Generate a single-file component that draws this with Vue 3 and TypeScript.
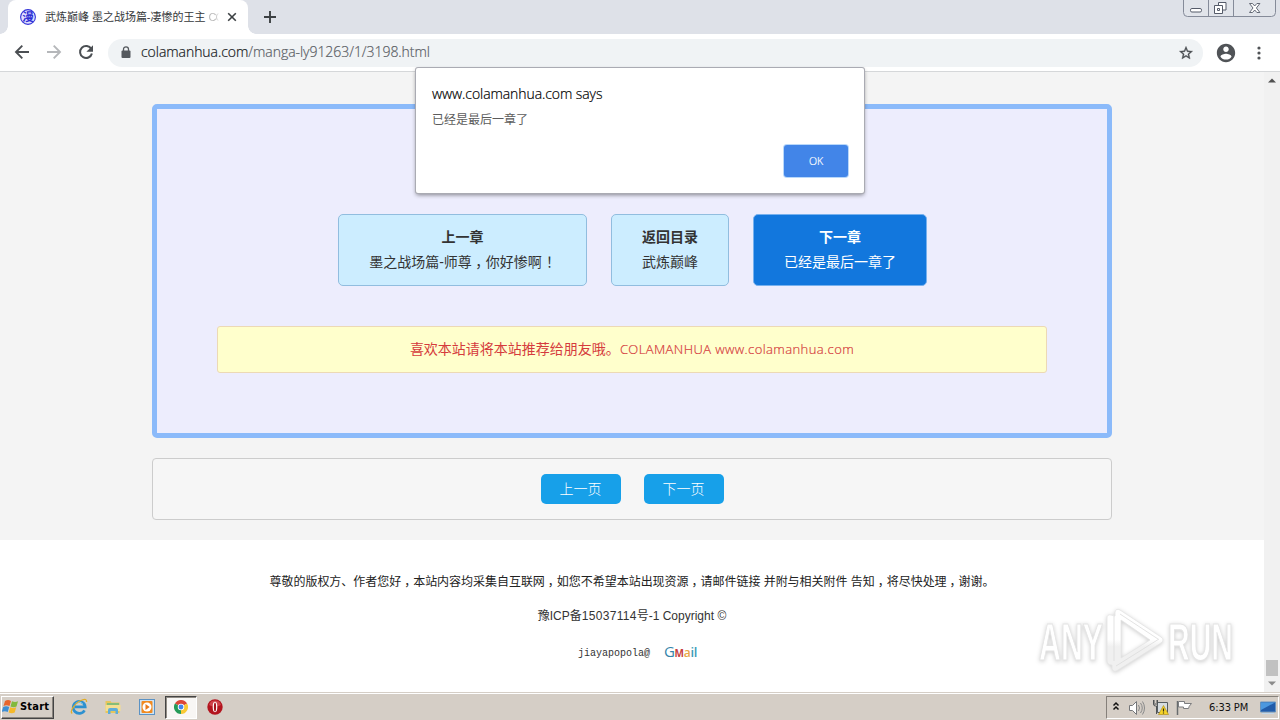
<script setup lang="ts">
interface Chapter {
  title: string
  name: string
  active: boolean
}

const chapters: Chapter[] = [
  { title: '上一章', name: '墨之战场篇-师尊，你好惨啊！', active: false },
  { title: '返回目录', name: '武炼巅峰', active: false },
  { title: '下一章', name: '已经是最后一章了', active: true },
]
const pages: string[] = ['上一页', '下一页']
const legal = '尊敬的版权方、作者您好，本站内容均采集自互联网，如您不希望本站出现资源，请邮件链接 并附与相关附件 告知，将尽快处理，谢谢。'

// Separates full-width marks so they can sit in the middle of their cell.
const pieces = (text: string): string[] => text.split(/([，！])/).filter((s) => s !== '')
const isMark = (s: string): boolean => s === '，' || s === '！'
</script>

<template>
  <div class="screen">
    <header class="tabs">
      <div class="tab">
        <svg class="favicon" width="16" height="16" viewBox="0 0 16 16">
          <circle cx="8" cy="8" r="7.4" fill="#dfe0ff" stroke="#3434d8" stroke-width="1.1" />
          <text x="8" y="12.2" text-anchor="middle" font-size="11.5" font-weight="700" fill="#2c2cd4">漫</text>
        </svg>
        <span class="tab-title">武炼巅峰 墨之战场篇-凄惨的王主 <i>CO</i></span>
        <svg class="tab-close" width="10" height="10" viewBox="0 0 10 10"><path d="M1.2 1.2 8.8 8.8M8.8 1.2 1.2 8.8" stroke="#3c4043" stroke-width="1.6" /></svg>
      </div>
      <svg class="newtab" width="12" height="12" viewBox="0 0 12 12"><path d="M6 0v12M0 6h12" stroke="#3c4043" stroke-width="1.9" /></svg>
      <svg class="winctl" width="94" height="17" viewBox="0 0 94 17">
        <path d="M.5 0v12.5q0 4 4 4h84q4 0 4-4V0M25.5 0v16.5M50.5 0v16.5" fill="#e1e4ea" stroke="#858b99" />
        <rect x="7.500" y="8.500" width="11" height="3.500" rx="1.4" fill="#fff" stroke="#555b69" />
        <path d="M35.500 2.500h7.500v7.500h-7.500z" fill="#fff" stroke="#555b69" />
        <path d="M31.500 5.500h8v8h-8zM34.500 8.500h2v2h-2z" fill="#fff" stroke="#555b69" />
        <path d="M66.500 3.500h3l2.200 2.500 2.200-2.500h3l-3.500 4.500 3.500 4.500h-3l-2.200-2.500-2.200 2.500h-3l3.500-4.500z" fill="#fff" stroke="#555b69" stroke-width=".9" />
      </svg>
    </header>

    <nav class="toolbar">
      <svg class="nav-icons" width="108" height="37" viewBox="0 0 108 37" fill="none">
        <path d="M29 18H16.500M22.300 11.700 16 18l6.300 6.300" stroke="#4b4f53" stroke-width="1.9" />
        <path d="M47 18h12.500M53.700 11.700 60 18l-6.300 6.300" stroke="#b5b7ba" stroke-width="1.9" />
        <path d="M91.300 15a6 6 0 1 0 .6 4.400" stroke="#4b4f53" stroke-width="2" />
        <path d="M93 11.200v6.600h-6.600z" fill="#4b4f53" />
      </svg>
      <div class="omnibox">
        <svg width="10" height="13" viewBox="0 0 10 13"><rect x=".5" y="4.500" width="9" height="7.500" rx="1" fill="#55595e" /><path d="M2.500 5V3.300a2.500 2.500 0 0 1 5 0V5" fill="none" stroke="#55595e" stroke-width="1.300" /></svg>
        <span class="url">colamanhua.com<em>/manga-ly91263/1/3198.html</em></span>
        <svg class="star" width="16" height="16" viewBox="0 0 24 24"><path d="m22 9.240-7.190-.62L12 2 9.190 8.630 2 9.240l5.460 4.730L5.820 21 12 17.270 18.180 21l-1.630-7.030zM12 15.400l-3.760 2.270 1-4.280-3.320-2.880 4.380-.38L12 6.100l1.710 4.040 4.380.38-3.320 2.880 1 4.280z" fill="#484c50" stroke="#484c50" stroke-width=".5" /></svg>
      </div>
      <svg class="avatar" width="22" height="22" viewBox="0 0 24 24"><path d="M12 2C6.480 2 2 6.480 2 12s4.480 10 10 10 10-4.480 10-10S17.520 2 12 2zm0 3c1.660 0 3 1.340 3 3s-1.340 3-3 3-3-1.340-3-3 1.340-3 3-3zm0 14.200c-2.500 0-4.710-1.280-6-3.220.03-1.990 4-3.080 6-3.080s5.970 1.090 6 3.080c-1.290 1.940-3.500 3.220-6 3.220z" fill="#505357" /></svg>
      <svg class="dots" width="4" height="14" viewBox="0 0 4 14" fill="#505357"><circle cx="2" cy="2" r="1.600" /><circle cx="2" cy="7" r="1.600" /><circle cx="2" cy="12" r="1.600" /></svg>
    </nav>

    <div class="viewport">
      <main class="page">
        <section class="reader">
          <div class="chapters">
            <a v-for="c in chapters" :key="c.title" class="chapter" :class="{ active: c.active }">
              <b>{{ c.title }}</b>
              <span><span v-for="(s, i) in pieces(c.name)" :key="i" :class="{ mark: isMark(s), bang: s === '！' }">{{ s }}</span></span>
            </a>
          </div>
          <p class="notice">喜欢本站请将本站推荐给朋友哦。<span>COLAMANHUA www.colamanhua.com</span></p>
        </section>
        <section class="pager"><a v-for="p in pages" :key="p">{{ p }}</a></section>
        <footer class="footer">
          <p class="legal"><span v-for="(s, i) in pieces(legal)" :key="i" :class="{ mark: isMark(s) }">{{ s }}</span></p>
          <p class="icp">豫ICP备<span>15037114</span>号-1 Copyright ©</p>
          <p class="mail"><span>jiayapopola@</span><strong><i class="g">G</i><i class="m">M</i><i class="a">a</i><i class="l">il</i></strong></p>
        </footer>
      </main>
      <aside class="scrollbar">
        <svg width="8" height="5" viewBox="0 0 8 5"><path d="M0 4.500 4 .5l4 4z" fill="#505050" /></svg>
        <div class="thumb"></div>
        <svg width="8" height="5" viewBox="0 0 8 5"><path d="M0 .5h8l-4 4z" fill="#8b8b8b" /></svg>
      </aside>
    </div>

    <div class="dialog">
      <h1>www.colamanhua.com says</h1>
      <p>已经是最后一章了</p>
      <button>OK</button>
    </div>

    <svg class="watermark" width="230" height="74" viewBox="0 0 230 74">
      <defs>
        <linearGradient id="wm" x1="0" y1="0" x2="0" y2="74" gradientUnits="userSpaceOnUse">
          <stop offset=".45" stop-color="#fff" /><stop offset=".55" stop-color="#f0f0f0" />
        </linearGradient>
      </defs>
      <g fill="url(#wm)" stroke="#e4e4e4" stroke-width=".8">
        <text transform="translate(9 54) scale(.583 1)" font-size="52">ANY</text>
        <text transform="translate(138 54) scale(.577 1)" font-size="52">RUN</text>
        <path fill-rule="evenodd" d="M77 12q0-4 4-3l4 1V6q1-4 5-2l41 27q4 3 0 6L88 64q-4 3-6-1v-4q-5 0-5-5zM91 14v38l29-18z" />
        <path d="M84 10v45M90 8l38 25M86 60l43-27" fill="none" stroke="#dcdcdc" />
      </g>
    </svg>

    <div class="taskbar">
      <div class="start">
        <svg width="17" height="16" viewBox="0 0 17 16">
          <path d="M3 2q3-2 6 0L7.500 7Q4.500 5.300 1.500 7z" fill="#e8652c" /><path d="M10 2.300q3 1.500 6 0L14.500 7.500q-3 1.500-6 0z" fill="#82b93c" />
          <path d="M1.200 8q3-1.700 6 0l-1.500 5q-3-1.700-6 0z" fill="#3d8ed4" /><path d="M8.200 8.300q3 1.600 6 0l-1.500 5.200q-3 1.500-6 0z" fill="#f5b829" />
        </svg>
        <span>Start</span>
      </div>
      <div class="launch">
        <svg width="18" height="18" viewBox="0 0 18 18" fill="none">
          <path d="M14.500 12.300A6 6 0 1 1 15.200 8.800H5" stroke="#2d91d0" stroke-width="2.700" /><path d="M12.900 6.200A4.500 4.500 0 0 0 5.500 6" stroke="#8ad2f4" />
          <path d="M2.200 15.500C-1 13 6 4 12 2q5-2 4.500 2" stroke="#e1ad27" stroke-width="1.300" />
        </svg>
      </div>
      <div class="launch">
        <svg width="18" height="18" viewBox="0 0 18 18">
          <path d="M1.500 3h5l1 1.500h8V15h-14z" fill="#e7c65b" /><path d="M3 5h12v4H3z" fill="#86bd77" /><path d="M1.500 7h15v6h-15z" fill="#f4df91" /><path d="M4 16v-4q0-2 2-2h6q2 0 2 2v4h-2.500v-3h-5v3z" fill="#5eadd9" />
        </svg>
      </div>
      <div class="launch">
        <svg width="18" height="18" viewBox="0 0 18 18">
          <rect x="1.500" y="1.500" width="15" height="15" fill="#cfe4f4" stroke="#5b92c4" /><rect x="3.500" y="3" width="11" height="12" rx="1" fill="#f18a20" /><circle cx="9" cy="9" r="4.500" fill="#fff" /><path d="M7.500 6v6l4.200-3z" fill="#e8791a" />
        </svg>
      </div>
      <div class="launch pressed">
        <svg width="14" height="14" viewBox="0 0 16 16">
          <path d="M8 8 1.070 4A8 8 0 0 1 14.930 4z" fill="#dc4637" /><path d="M8 8l6.930-4A8 8 0 0 1 8 16z" fill="#f9c934" /><path d="M8 8v8A8 8 0 0 1 1.070 4z" fill="#259b58" /><circle cx="8" cy="8" r="3.700" fill="#fff" /><circle cx="8" cy="8" r="2.800" fill="#4384ec" />
        </svg>
      </div>
      <div class="launch last">
        <svg width="16" height="16" viewBox="0 0 16 16"><circle cx="8" cy="8" r="7.700" fill="#b3141e" /><path d="M2 6a6.300 6.300 0 0 1 12 0q-6 3-12 0" fill="#cf434b" /><ellipse cx="8" cy="8" rx="2.300" ry="5.200" fill="#fff" /><ellipse cx="8" cy="8" rx="1.100" ry="4.500" fill="#a5121b" /></svg>
      </div>
      <div class="tray">
        <svg width="96" height="20" viewBox="0 0 96 20" fill="none">
          <path d="M6.500 7.500 9 5l2.500 2.500M6.500 11.500 9 9l2.500 2.500" stroke="#111" stroke-width="1.500" />
          <path d="M22.500 7.500h3l4-4v13l-4-4h-3z" fill="#fff" stroke="#75777a" />
          <path d="M31.500 7q2 3 0 6M33.500 5q3.500 5 0 10M35.500 3.500q4 6.500 0 13" stroke="#88898a" />
          <path d="M50.500 4.500h10v10h-10z" fill="#d7dde1" stroke="#565c60" /><path d="M46.500 2v4q0 2 2 2h1V16M50.500 2v4h-4M47 2v3M50 2v3" stroke="#4f5355" />
          <path d="m56.500 7.500 5 9H51.500z" fill="#f5d329" stroke="#aa870e" stroke-width=".6" /><path d="M56.500 10.500v3M56.500 14.500v1" stroke="#332c10" stroke-width="1.200" />
          <path d="M70.500 3v14" stroke="#686c6e" stroke-width="1.500" /><path d="M71.500 3.500h6v2h7q-3 3-3 5h-5v-1.500h-5z" fill="#fff" stroke="#7c7d7f" />
        </svg>
        <time>6:33 PM</time>
        <svg class="desk" width="16" height="14" viewBox="0 0 16 14"><path d="M.5 1h15v10H.5z" fill="#225ca9" stroke="#6893bd" /><path d="M1 1.500h14L1 9z" fill="#4c98df" /><path d="M2 12.500h12" stroke="#c4d8e8" /></svg>
      </div>
    </div>
  </div>
</template>

<style>
body { margin: 0; overflow: hidden; }
</style>

<style scoped>
* { box-sizing: border-box; }
.screen { position: relative; width: 1280px; height: 720px; display: flex; flex-direction: column; overflow: hidden; background: #fff; color: #333; font-family: "Liberation Sans", "Noto Sans CJK SC", sans-serif; }
svg { display: block; flex: none; }
p, h1 { margin: 0; font-weight: 400; white-space: nowrap; }
i, em { font-style: normal; }
.mark { display: inline-block; width: 1em; text-indent: .25em; line-height: 1; }
.bang { text-indent: .3em; }
.tabs { height: 34px; flex: none; background: #dee1e8; display: flex; padding-left: 8px; }
.tab { width: 240px; height: 34px; background: #fff; border-radius: 8px 8px 0 0; display: flex; align-items: center; padding: 0 11px 0 12px; position: relative; }
.tab::before, .tab::after { content: ""; position: absolute; bottom: 0; width: 8px; height: 8px; }
.tab::before { left: -8px; background: radial-gradient(circle at 0 0, transparent 7.5px, #fff 8px); }
.tab::after { right: -8px; background: radial-gradient(circle at 100% 0, transparent 7.5px, #fff 8px); }
.tab-title { margin-left: 9px; width: 178px; font-size: 11px; line-height: 18px; white-space: nowrap; color: #35373a; letter-spacing: -.02px; }
.tab-title i { color: #bbb; letter-spacing: -1px; -webkit-mask-image: linear-gradient(90deg, #000 50%, transparent 75%); mask-image: linear-gradient(90deg, #000 50%, transparent 75%); }
.tab-close { margin-left: auto; }
.newtab { margin: 11px 0 0 16px; }
.winctl { margin-left: auto; margin-right: 3px; }
.toolbar { height: 38px; flex: none; border-bottom: 1px solid #d5d7d9; display: flex; align-items: center; background: #fff; }
.omnibox { width: 1095px; height: 28px; border-radius: 14px; background: #f0f3f5; display: flex; align-items: center; padding: 0 9px 0 13px; }
.url { font: 300 14px/26px "Open Sans", sans-serif; color: #15181b; margin: -2px 0 0 10px; letter-spacing: -.05px; -webkit-text-stroke: .2px; }
.url em { color: #5b6065; }
.star { margin-left: auto; }
.avatar { margin-left: 12px; }
.dots { margin-left: 20px; }
.viewport { height: 620px; flex: none; display: flex; }
.page { width: 1264px; background: #f4f4f4; display: flex; flex-direction: column; align-items: center; }
.reader { margin-top: 32px; width: 960px; height: 334px; border: 5px solid #8bbafa; border-radius: 5px; background: #ededfd; padding: 105px 60px 0; }
.chapters { display: flex; justify-content: center; gap: 24px; }
.chapter { height: 72px; border: 1px solid #91bddf; border-radius: 5px; background: #ccedff; padding: 10px 30px; display: flex; flex-direction: column; align-items: center; font-size: 14px; line-height: 25px; white-space: nowrap; }
.chapter:first-child { width: 249px; padding: 10px 0; }
.chapter.active { background: #1277dd; color: #fff; border-color: #77b1ee; }
.chapters { padding-left: 1px; }
.notice { margin-top: 40px; height: 47px; border: 1px solid #ecd9b5; border-radius: 3px; background: #ffc; color: #d53b3d; font-size: 14px; line-height: 45px; text-align: center; }
.notice span { font: 300 13px/20px "Open Sans", sans-serif; letter-spacing: .41px; -webkit-text-stroke: .2px; }
.pager { width: 960px; height: 62px; margin-top: 20px; border: 1px solid #ccc; border-radius: 4px; background: #f6f6f6; display: flex; justify-content: center; align-items: center; gap: 23px; }
.pager a { width: 80px; height: 30px; border-radius: 5px; background: #17a0e9; color: #fff; font-size: 14px; line-height: 31px; text-align: center; font-weight: 300; }
.footer { width: 100%; flex: 1; margin-top: 20px; background: #fff; display: flex; flex-direction: column; align-items: center; font-size: 12px; line-height: 18px; padding-top: 33px; }
.legal { color: #222; letter-spacing: -.03px; height: 18px; }
.icp { margin-top: 16px; }
.icp span { letter-spacing: .3px; }
.mail { margin-top: 18px; display: flex; margin-left: 11px; }
.mail span { font: 10px/22px "Liberation Mono", monospace; }
.mail strong { margin-left: 14px; margin-top: -1px; font: 15px/18px "Open Sans", sans-serif; letter-spacing: -.3px; }
.g { color: #3585aa; } .m { color: #c63e3e; font-size: 10px; font-weight: 700; } .a { color: #e9a645; font-size: 12px; font-weight: 600; } .l { color: #3c9cb9; font-size: 13px; font-weight: 600; }
.scrollbar { width: 16px; background: #f1f1f1; display: flex; flex-direction: column; align-items: center; padding: 6px 0 6px; }
.thumb { width: 12px; height: 16px; background: #c1c1c1; margin: auto 0 5px; }
.dialog { position: absolute; left: 416px; top: 68px; width: 448px; height: 125px; background: #fff; border-radius: 2px; box-shadow: 0 0 0 1px #aaabb3, 0 2px 4px rgba(0,0,0,.45); padding: 16px; display: flex; flex-direction: column; }
.dialog h1 { font: 300 14px/20px "Open Sans", sans-serif; color: #000; letter-spacing: -.08px; -webkit-text-stroke: .2px; }
.dialog p { font-size: 12px; line-height: 18px; margin-top: 7px; color: #5c5c5c; }
.dialog button { width: 64px; height: 32px; border: 0; border-radius: 3px; background: #4285e8; color: #fff; margin: auto 0 0 auto; font: 300 10.5px/20px "Open Sans", sans-serif; -webkit-text-stroke: .2px; box-shadow: 0 0 0 1px #b9d8fa; }
.watermark { position: absolute; left: 1030px; top: 606px; font-family: "Liberation Sans", sans-serif; filter: drop-shadow(0 1px 2px rgba(0,0,0,.2)); }
.watermark text { stroke-width: 1.2px; font-weight: 700; }
.taskbar { height: 28px; flex: none; background: #d5cec6; border-top: 1px solid #d5cec6; box-shadow: inset 0 1px #fff; display: flex; align-items: center; }
.start { margin-left: 1px; margin-top: 1px; width: 53px; height: 23px; border: 1px solid; border-color: #fff #444 #444 #fff; box-shadow: inset -1px -1px #89847e; display: flex; align-items: center; color: #000; font: 700 11px/20px "DejaVu Sans Condensed", "DejaVu Sans", sans-serif; }
.start span { letter-spacing: .2px; margin-left: 1px; }
.launch { width: 34px; height: 23px; display: flex; align-items: center; justify-content: center; margin-top: 1px; }
.start + .launch { margin-left: 8px; }
.pressed { width: 32px; margin-left: 1px; border: 1px solid; border-color: #444 #fff #fff #444; background: #f8f6f4; box-shadow: inset 1px 1px #918c85; }
.last { margin-left: 1px; }
.tray { margin-left: auto; margin-right: 1px; margin-top: 2px; width: 173px; height: 23px; border: 1px solid; border-color: #85807a #fff #fff #85807a; display: flex; align-items: center; }
.tray time { font: 11px/18px "DejaVu Sans Condensed", "DejaVu Sans", sans-serif; color: #111; margin-left: 6px; white-space: nowrap; letter-spacing: -.1px; width: 46px; }
.desk { margin-left: 5px; }
.favicon { font-family: "Noto Sans CJK SC", sans-serif; }
</style>
